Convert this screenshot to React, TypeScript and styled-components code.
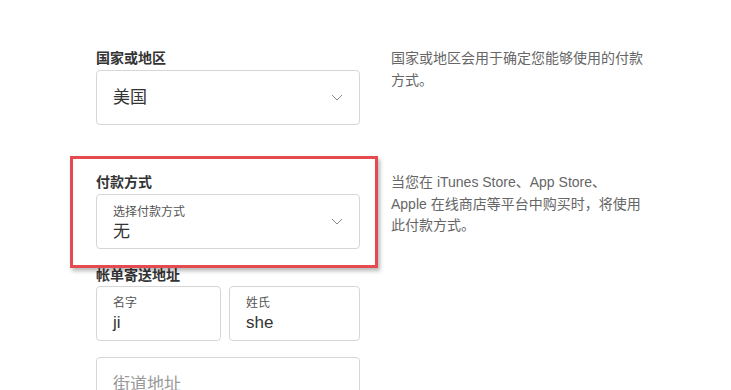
import React from "react";
import styled, { createGlobalStyle } from "styled-components";

const Global = createGlobalStyle`
  html, body { margin: 0; padding: 0; background: #fff; }
  body {
    font-family: "Liberation Sans", "Noto Sans CJK SC", sans-serif;
    color: #333;
    overflow: hidden;
  }
`;

const Page = styled.div`
  padding: 48px 0 0 96px;
  width: 731px;
  height: 390px;
  box-sizing: border-box;
  overflow: hidden;
`;

const Grid = styled.div`
  display: grid;
  grid-template-columns: 264px 262px;
  column-gap: 31px;
  row-gap: 47px;
  align-items: start;
`;

const Section = styled.div`
  position: relative;
  display: flex;
  flex-direction: column;
  gap: 2px;
`;

const Highlight = styled.div`
  position: absolute;
  left: -26px;
  right: -18px;
  top: -16px;
  bottom: -19px;
  border: 3px solid #e34b50;
  box-shadow: 2px 3px 4px rgba(0, 0, 0, 0.28);
  pointer-events: none;
  z-index: 2;
`;

const Label = styled.div`
  font-size: 14px;
  line-height: 20px;
  height: 20px;
  font-weight: 700;
  color: #333;
`;

const Field = styled.div`
  box-sizing: border-box;
  height: 55px;
  border: 1px solid #d6d6d6;
  border-radius: 4px;
  padding: 0 16px;
  display: flex;
  align-items: center;
  justify-content: space-between;
  background: #fff;
`;

const FieldText = styled.div`
  align-self: stretch;
  display: flex;
  flex-direction: column;
  justify-content: flex-start;
  gap: 1px;
  padding-top: 10px;
`;

const SmallLabel = styled.div`
  font-size: 12px;
  line-height: 15px;
  color: #555;
`;

const Value = styled.div<{ $placeholder?: boolean }>`
  font-size: 17px;
  line-height: 22px;
  color: ${(p) => (p.$placeholder ? "#999" : "#333")};
`;

const Chevron = styled.svg`
  width: 12px;
  height: 7px;
  flex-shrink: 0;
`;

const Description = styled.p`
  margin: 0;
  font-size: 14px;
  line-height: 21.5px;
  color: #666;
`;

const Billing = styled.div`
  margin-top: 16px;
  display: flex;
  flex-direction: column;
  gap: 16px;
  width: 264px;
`;

const BillingTop = styled.div`
  display: flex;
  flex-direction: column;
  gap: 1px;
`;

const NameRow = styled.div`
  display: grid;
  grid-template-columns: 125px 131px;
  column-gap: 8px;
`;

const NameField = styled(Field)`
  align-items: stretch;
`;

const NameText = styled(FieldText)`
  padding-top: 9px;
`;

const ChevronIcon = () => (
  <Chevron viewBox="0 0 12 7">
    <path d="M1 1l5 5 5-5" fill="none" stroke="#8a8a8a" strokeWidth="1" />
  </Chevron>
);

export default function App() {
  return (
    <>
      <Global />
      <Page>
        <Grid>
          <Section>
            <Label>国家或地区</Label>
            <Field>
              <Value>美国</Value>
              <ChevronIcon />
            </Field>
          </Section>
          <Description>国家或地区会用于确定您能够使用的付款方式。</Description>

          <Section>
            <Highlight />
            <Label>付款方式</Label>
            <Field>
              <FieldText>
                <SmallLabel>选择付款方式</SmallLabel>
                <Value>无</Value>
              </FieldText>
              <ChevronIcon />
            </Field>
          </Section>
          <Description>
            当您在 iTunes Store、App Store、
            <br />
            Apple 在线商店等平台中购买时，将使用此付款方式。
          </Description>
        </Grid>
        <Billing>
          <BillingTop>
            <Label>帐单寄送地址</Label>
            <NameRow>
              <NameField>
                <NameText>
                  <SmallLabel>名字</SmallLabel>
                  <Value>ji</Value>
                </NameText>
              </NameField>
              <NameField>
                <NameText>
                  <SmallLabel>姓氏</SmallLabel>
                  <Value>she</Value>
                </NameText>
              </NameField>
            </NameRow>
          </BillingTop>
          <Field>
            <Value $placeholder>街道地址</Value>
          </Field>
        </Billing>
      </Page>
    </>
  );
}
